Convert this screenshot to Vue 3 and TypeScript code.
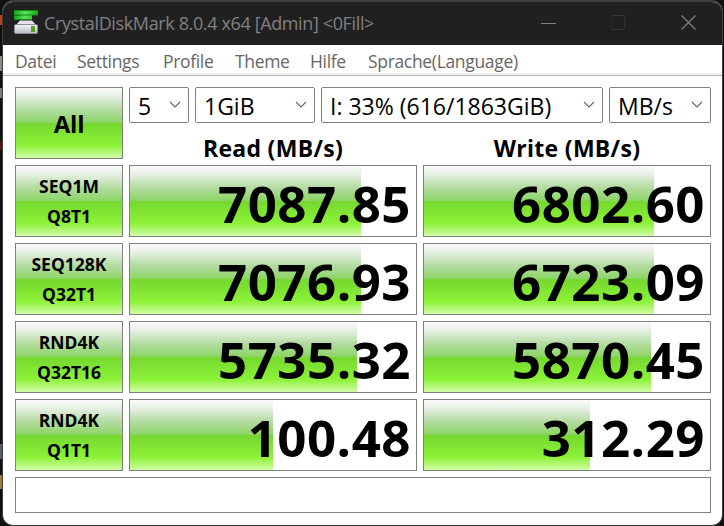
<script setup lang="ts">
import { ref } from "vue";

interface Result {
  value: string;
  fill: number;
}

interface Row {
  test: string;
  queue: string;
  read: Result;
  write: Result;
}

const menuItems = ["Datei", "Settings", "Profile", "Theme", "Hilfe", "Sprache(Language)"];

const selects = ref([
  { name: "count", value: "5" },
  { name: "size", value: "1GiB" },
  { name: "drive", value: "I: 33% (616/1863GiB)" },
  { name: "unit", value: "MB/s" },
]);

// fill is the bar width in px
const rows = ref<Row[]>([
  {
    test: "SEQ1M",
    queue: "Q8T1",
    read: { value: "7087.85", fill: 231 },
    write: { value: "6802.60", fill: 230 },
  },
  {
    test: "SEQ128K",
    queue: "Q32T1",
    read: { value: "7076.93", fill: 231 },
    write: { value: "6723.09", fill: 230 },
  },
  {
    test: "RND4K",
    queue: "Q32T16",
    read: { value: "5735.32", fill: 227 },
    write: { value: "5870.45", fill: 227 },
  },
  {
    test: "RND4K",
    queue: "Q1T1",
    read: { value: "100.48", fill: 143 },
    write: { value: "312.29", fill: 166 },
  },
]);
</script>

<template>
  <div class="desktop">
    <div class="window">
      <header class="titlebar">
        <svg class="app-icon" width="24" height="24" viewBox="0 0 24 24">
          <defs>
            <linearGradient id="arrow" x1="0" y1="0" x2="1" y2="0">
              <stop offset="0" stop-color="#0fa315" />
              <stop offset="0.45" stop-color="#5fe05a" />
              <stop offset="1" stop-color="#16ad18" />
            </linearGradient>
            <linearGradient id="disk" x1="0" y1="0" x2="0" y2="1">
              <stop offset="0" stop-color="#f4f4f8" />
              <stop offset="1" stop-color="#b9b9c8" />
            </linearGradient>
          </defs>
          <path d="M0 0H24V5H18V10H0V5.5H6V5H0Z" fill="url(#arrow)" />
          <path d="M0 0.5H24M0 5H24M0 9.5H18" stroke="#0b8f10" />
          <path d="M6 10.5H18L23 16H1Z" fill="#e2e2e8" />
          <rect x="0.5" y="14.5" width="23" height="9" rx="1.5" fill="url(#disk)" stroke="#8d8d98" />
          <rect x="17" y="16" width="4" height="6" fill="#55a51c" />
        </svg>
        <span class="title">CrystalDiskMark 8.0.4 x64 [Admin] &lt;0Fill&gt;</span>
        <div class="controls">
          <svg width="16" height="16" viewBox="0 0 16 16"><path d="M0 8.5H15" stroke="#808080" /></svg>
          <svg width="16" height="16" viewBox="0 0 16 16">
            <rect x="0" y="0.5" width="14" height="14" rx="1.5" fill="none" stroke="#353535" />
          </svg>
          <svg width="16" height="16" viewBox="0 0 16 16">
            <path d="M0.5 0.5L14.5 14.5M14.5 0.5L0.5 14.5" fill="none" stroke="#808080" stroke-width="1.2" />
          </svg>
        </div>
      </header>

      <nav class="menu">
        <span v-for="item in menuItems" :key="item" :class="['menu-item', item.slice(0, 5).toLowerCase()]">{{ item }}</span>
      </nav>

      <main class="content">
        <div class="top">
          <button class="test-button all">All</button>
          <div class="settings">
            <div class="selects">
              <div v-for="select in selects" :key="select.name" :class="['select', select.name]">
                <span>{{ select.value }}</span>
                <svg width="12" height="8" viewBox="0 0 12 8">
                  <path d="M1 1L6 6L11 1" fill="none" stroke="#666" stroke-width="1.1" />
                </svg>
              </div>
            </div>
            <div class="headings">
              <span>Read (MB/s)</span>
              <span>Write (MB/s)</span>
            </div>
          </div>
        </div>

        <div v-for="row in rows" :key="row.test + row.queue" class="row">
          <button class="test-button">
            <span>{{ row.test }}</span>
            <span>{{ row.queue }}</span>
          </button>
          <div
            v-for="(result, i) in [row.read, row.write]"
            :key="i"
            class="meter"
            :style="{ backgroundSize: `${result.fill}px 100%` }"
          >
            {{ result.value }}
          </div>
        </div>

        <div class="comment"></div>
      </main>
    </div>
  </div>
</template>

<style>
body {
  margin: 0;
}
</style>

<style scoped>
.desktop {
  --green: linear-gradient(#fafafa, #e6f0e4 12%, #b5dca4 30%, #8ed568 49%, #76d82f 51%, #8cf238 82%, #d2fca8 100%);
  box-sizing: border-box;
  width: 724px;
  height: 526px;
  padding: 0 1px 0 2px;
  /* slivers of whatever sits behind the window */
  background:
    linear-gradient(#c23c0c, #c23c0c) 0 15px / 2px 10px no-repeat,
    linear-gradient(#8a8a80, #8a8a80) 0 56px / 2px 15px no-repeat,
    linear-gradient(#777c88, #777c88) 0 88px / 2px 10px no-repeat,
    linear-gradient(#5c0c10, #5c0c10) 0 141px / 2px 9px no-repeat,
    linear-gradient(#555c78, #555c78) 0 444px / 2px 15px no-repeat,
    linear-gradient(#a87838, #a87838) 0 475px / 2px 14px no-repeat,
    #111;
  overflow: hidden;
  font-family: "Open Sans", "Noto Sans", sans-serif;
}

.window {
  box-sizing: border-box;
  height: 526px;
  border: 1px solid #3d3d3d;
  border-top-width: 2px;
  border-radius: 11px;
  background: #fff;
  overflow: hidden;
}

.titlebar {
  display: flex;
  align-items: center;
  height: 43px;
  padding-left: 11px;
  background: #202020;
}

.app-icon {
  margin-top: -3px;
}

.title {
  margin-left: 6px;
  color: #808080;
  font-size: 18px;
  letter-spacing: -0.37px;
  line-height: 43px;
  white-space: nowrap;
}

.controls {
  display: flex;
  gap: 54px;
  margin-top: -2px;
  margin-left: auto;
  margin-right: 25px;
}

.menu {
  display: flex;
  box-sizing: border-box;
  height: 31px;
  padding-left: 12px;
  border-bottom: 1px solid #b8b8b8;
  background: linear-gradient(#fff 28px, #f0f0f0 28px);
  color: #666;
  font-size: 17.5px;
  letter-spacing: -0.33px;
  line-height: 32px;
  white-space: nowrap;
}

.menu-item {
  flex: none;
}

.datei {
  width: 62px;
}
.setti {
  width: 86px;
}
.profi {
  width: 72px;
}
.theme {
  width: 75px;
}
.hilfe {
  width: 58px;
}

.content {
  display: flex;
  flex-direction: column;
  gap: 6px;
  padding: 11px 10px 0 12px;
}

.top,
.row,
.selects,
.headings {
  display: flex;
  gap: 6px;
}

.test-button {
  display: flex;
  flex: none;
  flex-direction: column;
  align-items: center;
  justify-content: center;
  box-sizing: border-box;
  width: 108px;
  height: 72px;
  padding: 0;
  border: 1px solid #808080;
  background: var(--green);
  color: #000;
  font-family: inherit;
  font-size: 17.5px;
  font-weight: 700;
  line-height: 30px;
}

.all {
  padding-top: 2px;
  font-size: 24px;
  letter-spacing: -0.3px;
}

.settings {
  width: 582px;
}

.select {
  display: flex;
  align-items: center;
  justify-content: space-between;
  box-sizing: border-box;
  height: 36px;
  padding: 1px 7px 0 8px;
  border: 1px solid #808080;
  border-radius: 2px;
  font-size: 23px;
  line-height: 32px;
  white-space: nowrap;
}

.select svg {
  margin-top: -1px;
}

.count {
  width: 60px;
}
.size {
  width: 120px;
}
.drive {
  width: 282px;
}
.unit {
  width: 102px;
}

.headings span {
  width: 288px;
  height: 36px;
  font-size: 23px;
  font-weight: 700;
  letter-spacing: 0.3px;
  line-height: 51px;
  text-align: center;
}

.meter {
  box-sizing: border-box;
  width: 288px;
  height: 72px;
  padding-right: 5px;
  border: 1px solid #808080;
  background: #fff var(--green) no-repeat;
  color: #000;
  font-size: 51px;
  font-weight: 700;
  letter-spacing: 0.5px;
  line-height: 74px;
  text-align: right;
}

.comment {
  box-sizing: border-box;
  width: 696px;
  height: 36px;
  border: 1px solid #808080;
}
</style>
